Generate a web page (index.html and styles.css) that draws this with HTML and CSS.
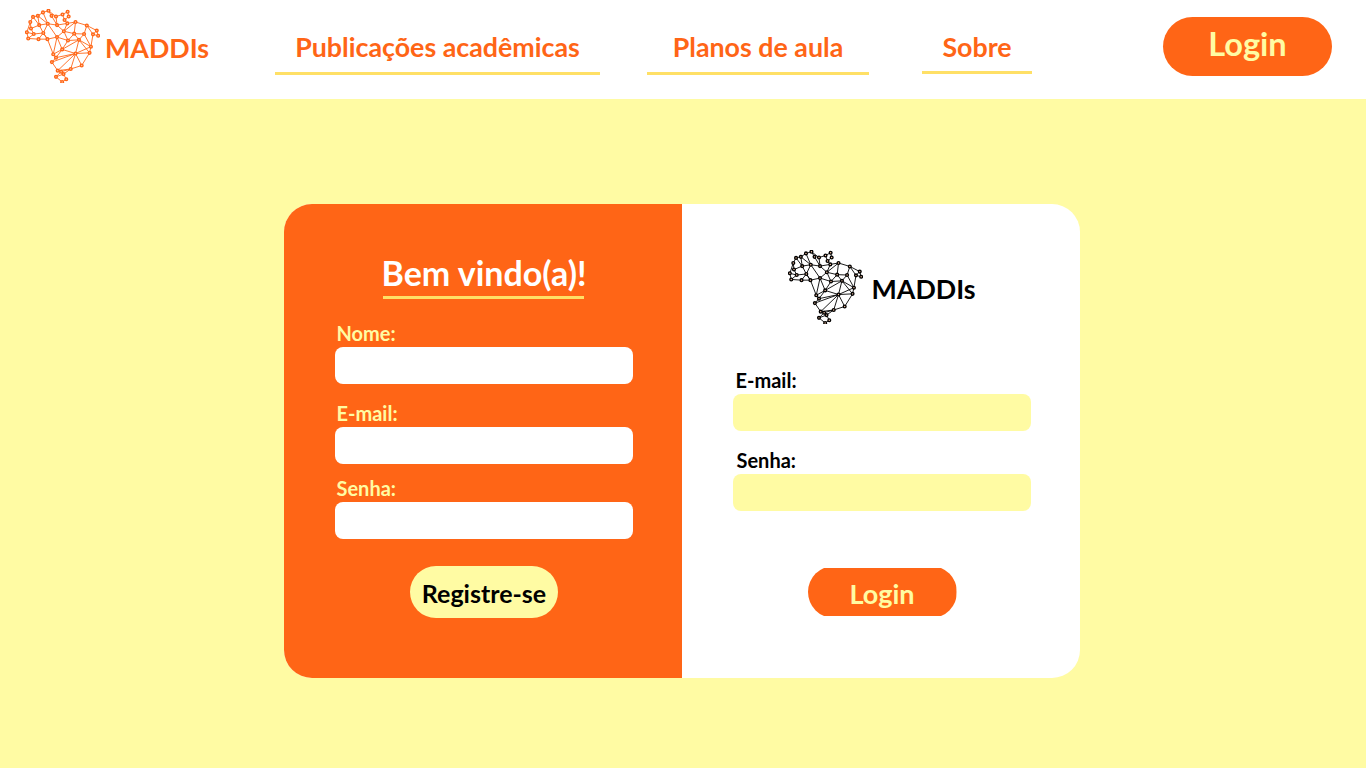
FILE: index.html
```html
<!DOCTYPE html>
<html lang="pt-BR">
<head>
<meta charset="utf-8">
<title>MADDIs</title>
<link rel="stylesheet" href="styles.css">
</head>
<body>
<svg class="defs" aria-hidden="true">
  <symbol id="brasil" viewBox="76 30 216 216">
    <path class="edges" d="M143 35L127 40L112 50L98 53L90 68L80 98L84 116L114 118L140 118L168 112L200 122L232 120L267 140L263 158L240 195L208 205L187 220L195 235L183 243L165 228L187 220L170 210L153 185L165 172L157 162L140 118L128 100L100 103L80 98M90 68L92 87L100 103L84 116M92 87L116 77L141 73L168 77L188 95L218 102L247 103L255 78L222 68L198 72L168 77L152 50L143 35L165 52L184 46L199 38L202 52L190 62L198 72L188 95L200 122L218 102L222 68L188 95M184 46L190 62M165 52L168 77M127 40L141 73L112 50L116 77L98 53M116 77L128 100L141 73L168 112L188 95M128 100L114 118M128 100L140 118M255 78L284 93L288 108L273 104L267 140L247 103L232 120L218 102M273 104L284 93M255 78L273 104M232 120L183 148L157 162M200 122L183 148L165 172L222 160L232 120L263 158L222 160L240 195M183 148L222 160L208 205L170 210L222 160L153 185M168 112L157 162M168 112L183 148M267 140L222 160M180 213L170 210M180 213L208 205M180 213L187 220M165 228L180 213"/>
    <g class="nodes">
      <circle cx="143" cy="35" r="4"/><circle cx="127" cy="40" r="4"/><circle cx="112" cy="50" r="4"/><circle cx="98" cy="53" r="4"/><circle cx="90" cy="68" r="4"/><circle cx="80" cy="98" r="4"/><circle cx="84" cy="116" r="4"/><circle cx="100" cy="103" r="4"/><circle cx="92" cy="87" r="4"/><circle cx="116" cy="77" r="4"/><circle cx="141" cy="73" r="4"/><circle cx="168" cy="77" r="4"/><circle cx="152" cy="50" r="4"/><circle cx="165" cy="52" r="4"/><circle cx="184" cy="46" r="4"/><circle cx="199" cy="38" r="4"/><circle cx="202" cy="52" r="4"/><circle cx="190" cy="62" r="4"/><circle cx="198" cy="72" r="4"/><circle cx="222" cy="68" r="4"/><circle cx="255" cy="78" r="4"/><circle cx="284" cy="93" r="4"/><circle cx="288" cy="108" r="4"/><circle cx="273" cy="104" r="4"/><circle cx="247" cy="103" r="4"/><circle cx="218" cy="102" r="4"/><circle cx="188" cy="95" r="4"/><circle cx="128" cy="100" r="4"/><circle cx="114" cy="118" r="4"/><circle cx="140" cy="118" r="4"/><circle cx="168" cy="112" r="4"/><circle cx="200" cy="122" r="4"/><circle cx="232" cy="120" r="4"/><circle cx="267" cy="140" r="4"/><circle cx="263" cy="158" r="4"/><circle cx="222" cy="160" r="4"/><circle cx="183" cy="148" r="4"/><circle cx="157" cy="162" r="4"/><circle cx="165" cy="172" r="4"/><circle cx="153" cy="185" r="4"/><circle cx="170" cy="210" r="4"/><circle cx="180" cy="213" r="4"/><circle cx="208" cy="205" r="4"/><circle cx="240" cy="195" r="4"/><circle cx="187" cy="220" r="4"/><circle cx="195" cy="235" r="4"/><circle cx="165" cy="228" r="4"/><circle cx="183" cy="243" r="4"/>
    </g>
  </symbol>
</svg>

<header class="topbar">
  <a class="brand brand-top" href="#">
    <svg class="mark"><use href="#brasil"/></svg>
    <span class="brand-name">MADDIs</span>
  </a>
  <nav class="nav">
    <a class="nav-link nav-pub" href="#">Publicações acadêmicas</a>
    <a class="nav-link nav-planos" href="#">Planos de aula</a>
    <a class="nav-link nav-sobre" href="#">Sobre</a>
  </nav>
  <a class="top-login" href="#">Login</a>
</header>

<main class="stage">
  <section class="card">
    <form class="panel panel-register">
      <h1 class="welcome">Bem vindo(a)!</h1>
      <div class="fields">
        <label class="field"><span class="field-label">Nome:</span><input class="input input-white" type="text"></label>
        <label class="field field-email"><span class="field-label">E-mail:</span><input class="input input-white" type="email"></label>
        <label class="field field-senha"><span class="field-label">Senha:</span><input class="input input-white" type="password"></label>
      </div>
      <button class="btn btn-register" type="button">Registre-se</button>
    </form>
    <form class="panel panel-login">
      <div class="brand brand-card">
        <svg class="mark"><use href="#brasil"/></svg>
        <span class="brand-name">MADDIs</span>
      </div>
      <div class="fields fields-login">
        <label class="field"><span class="field-label">E-mail:</span><input class="input input-yellow" type="email"></label>
        <label class="field field-login-senha"><span class="field-label">Senha:</span><input class="input input-yellow" type="password"></label>
      </div>
      <button class="btn btn-login" type="button">Login</button>
    </form>
  </section>
</main>
</body>
</html>
```

FILE: styles.css
```css
* { box-sizing: border-box; }
html, body { margin: 0; height: 100%; }
body {
  background: #fffba3;
  font-family: Lato, "Open Sans", sans-serif;
  font-weight: 700;
  overflow: hidden;
}
a { text-decoration: none; }
.defs { width: 0; height: 0; display: block; }

.topbar {
  height: 99px;
  background: #fff;
  display: flex;
  align-items: flex-start;
  padding-left: 25px;
}
.brand { display: flex; align-items: flex-start; }
.mark { width: 75px; height: 74px; display: block; flex: none; }
.edges { fill: none; stroke: currentColor; stroke-width: 2.6; }
.nodes circle { fill: #ffc9a8; stroke: currentColor; stroke-width: 4; }

.brand-top { color: #ff6516; padding-top: 9px; width: 250px; }
.brand-top .brand-name { font-size: 26.8px; line-height: 32px; margin: 23px 0 0 5px; }

.nav { display: flex; align-items: flex-start; padding-top: 30px; }
.nav-link {
  color: #ff6516;
  font-size: 26.8px;
  line-height: 34px;
  text-align: center;
  border-bottom: 3px solid #ffe066;
  height: 45px;
}
.nav-pub { width: 325px; }
.nav-planos { width: 222px; margin-left: 47px; }
.nav-sobre { width: 110px; margin-left: 53px; height: 44px; }

.top-login {
  width: 169px;
  height: 59px;
  margin: 17px 0 0 131px;
  border-radius: 30px;
  background: #ff6516;
  color: #fffba3;
  font-size: 32.6px;
  line-height: 54px;
  text-align: center;
}

.stage { padding: 105px 0 0 284px; }
.card {
  width: 796px;
  height: 474px;
  display: grid;
  grid-template-columns: 398px 398px;
  background: #fff;
  border-radius: 28px;
  overflow: hidden;
}
.panel { display: flex; flex-direction: column; align-items: center; }
.panel-register { background: #ff6516; color: #fffba3; }
.panel-login { color: #000; }

.welcome {
  margin: 50px 0 0;
  color: #fff;
  font-size: 34px;
  line-height: 38px;
  font-weight: 700;
  width: 201px;
  white-space: nowrap;
  text-indent: -1px;
  border-bottom: 3px solid #ffe066;
  height: 45px;
}

.fields { display: flex; flex-direction: column; width: 298px; margin-left: 2px; }
.field { display: flex; flex-direction: column; }
.field-label { font-size: 20px; line-height: 22px; height: 25px; padding-left: 1.5px; }
.panel-register .fields { margin-top: 23px; }
.field-email { margin-top: 18px; }
.field-senha { margin-top: 13px; }
.input {
  display: block;
  width: 298px;
  height: 37px;
  border: 0;
  border-radius: 8px;
  padding: 0;
}
.input-white { background: #fff; }
.input-yellow { background: #fffba3; }

.btn {
  border: 0;
  padding: 0;
  font-family: inherit;
  font-weight: 700;
}
.btn-register {
  width: 148px;
  height: 52px;
  margin: 27px 0 0 2px;
  padding-top: 2px;
  border-radius: 26px;
  background: #fffba3;
  color: #000;
  font-size: 25px;
}

.brand-card { color: #000; padding-top: 46px; width: 187px; }
.brand-card .brand-name { font-size: 26.8px; line-height: 32px; margin: 23px 0 0 9px; }
.brand-card .nodes circle { fill: #fff; stroke-width: 4.6; r: 4.6px; }
.brand-card .edges { stroke-width: 3.4; }

.fields-login { margin-top: 45px; gap: 18px; }
.fields-login .field-label { padding-left: 2.5px; }
.field-login-senha .field-label { padding-left: 3.5px; }
.btn-login {
  width: 149px;
  height: 52px;
  margin: 55px 0 0 2px;
  padding-top: 2px;
  border-radius: 26px;
  background: #ff6516;
  color: #fffba3;
  font-size: 27px;
  clip-path: inset(2px 0);
}
```
